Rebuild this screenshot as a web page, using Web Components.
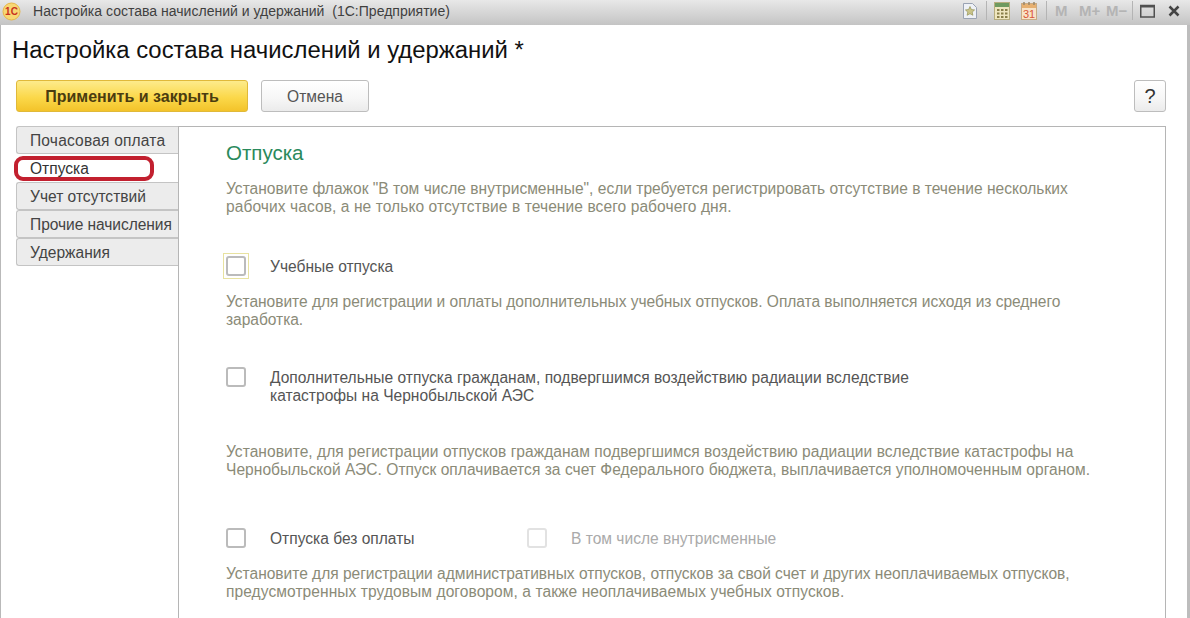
<!DOCTYPE html>
<html lang="ru">
<head>
<meta charset="utf-8">
<title>Настройка состава начислений и удержаний</title>
<style>
  html, body { margin: 0; height: 100%; overflow: hidden; background: #fff; }
  body { font-family: "Liberation Sans", Arial, sans-serif; }
</style>
</head>
<body>
<app-window>
  <title-bar slot="bar">Настройка состава начислений и удержаний&nbsp; (1С:Предприятие)</title-bar>
  <form-head>
    Настройка состава начислений и удержаний *
  </form-head>
  <tab-view>
    <side-tab style="letter-spacing:.18px">Почасовая оплата</side-tab>
    <side-tab active circled>Отпуска</side-tab>
    <side-tab>Учет отсутствий</side-tab>
    <side-tab style="letter-spacing:-.06px">Прочие начисления</side-tab>
    <side-tab>Удержания</side-tab>
    <h2 slot="page">Отпуска</h2>
    <hint-text slot="page" style="margin-top:16px">Установите флажок "В том числе внутрисменные", если требуется регистрировать отсутствие в течение нескольких<br><span style="letter-spacing:.07px">рабочих часов, а не только отсутствие в течение всего рабочего дня.</span></hint-text>
    <check-row slot="page" focused style="margin-top:37px">Учебные отпуска</check-row>
    <hint-text slot="page" style="margin-top:14px;letter-spacing:-.045px">Установите для регистрации и оплаты дополнительных учебных отпусков. Оплата выполняется исходя из среднего<br>заработка.</hint-text>
    <check-row slot="page" style="margin-top:35px">Дополнительные отпуска гражданам, подвергшимся воздействию радиации вследствие<br>катастрофы на Чернобыльской АЭС</check-row>
    <hint-text slot="page" style="margin-top:38px;letter-spacing:.028px">Установите, для регистрации отпусков гражданам подвергшимся воздействию радиации вследствие катастрофы на<br>Чернобыльской АЭС. Отпуск оплачивается за счет Федерального бюджета, выплачивается уполномоченным органом.</hint-text>
    <div slot="page" style="display:flex;margin-top:46px">
      <check-row style="width:301px">Отпуска без оплаты</check-row>
      <check-row disabled>В том числе внутрисменные</check-row>
    </div>
    <hint-text slot="page" style="margin-top:14px"><span style="letter-spacing:-.027px">Установите для регистрации административных отпусков, отпусков за свой счет и других неоплачиваемых отпусков,</span><br><span style="letter-spacing:.065px">предусмотренных трудовым договором, а также неоплачиваемых учебных отпусков.</span></hint-text>
  </tab-view>
</app-window>

<script>
class AppWindow extends HTMLElement {
  connectedCallback() {
    this.attachShadow({ mode: 'open' }).innerHTML = `
      <style>
        :host { display: flex; flex-direction: column; height: 618px; overflow: hidden; }
        main {
          flex: 1;
          display: flex;
          flex-direction: column;
          min-height: 0;
          border-left: 1px solid #b9b9b9;
          border-right: 3px solid #bdbdbd;
        }
      </style>
      <slot name="bar"></slot>
      <main><slot></slot></main>
    `;
  }
}

class TitleBar extends HTMLElement {
  connectedCallback() {
    this.attachShadow({ mode: 'open' }).innerHTML = `
      <style>
        :host {
          display: flex;
          align-items: center;
          height: 25px;
          flex: none;
          background: linear-gradient(#e8e8e8, #c4c4c4);
          color: #3f3f3f;
          font-size: 14.040px;
        }
        .logo {
          width: 19px; height: 19px; margin-left: 2px; flex: none;
          display: block;
          margin-top: -3px;
        }
        .caption { margin-left: 12px; white-space: nowrap; flex: 1; margin-top: -4px; }
        .tools { display: flex; align-items: center; height: 100%; margin-top: -4px; }
        .tools svg { display: block; flex: none; }
        .sep { width: 1px; height: 19px; background: #b4b4b4; }
        .m { color: #b4b4b4; font-weight: bold; font-size: 15px; white-space: nowrap; }
      </style>
      <svg class="logo" viewBox="0 0 19 19">
        <circle cx="9.500" cy="9.500" r="8.500" fill="#f7d774" stroke="#e8b64a"/>
        <text x="9.500" y="13" text-anchor="middle" font-size="10" font-weight="bold" fill="#c8321e" font-family="Liberation Sans">1С</text>
      </svg>
      <span class="caption"><slot></slot></span>
      <div class="tools">
        <svg width="16" height="18" viewBox="0 0 16 18" style="margin-right:8px">
          <path d="M1.500 1.500h9l4 4v11h-13z" fill="#eef1f6" stroke="#9aa3b3"/>
          <path d="M8 4.500l1.400 3 3.200.4-2.400 2.200.7 3.200L8 11.700l-2.900 1.600.7-3.200-2.400-2.200 3.200-.4z" fill="#c9c48a" stroke="#8b8a48" stroke-width=".6"/>
        </svg>
        <div class="sep"></div>
        <svg width="16" height="18" viewBox="0 0 16 18" style="margin:0 11px 0 7px">
          <rect x=".5" y=".5" width="15" height="17" fill="#efe6bf" stroke="#b7ad7e"/>
          <rect x="1" y="1" width="14" height="4" fill="#6f9a5f"/>
          <path d="M3 7h2.500v2H3zM7 7h2.500v2H7zM11 7h2.500v2H11zM3 10.500h2.500v2H3zM7 10.500h2.500v2H7zM11 10.500h2.500v2H11zM3 14h2.500v2H3zM7 14h2.500v2H7zM11 14h2.500v2H11z" fill="#8a7f4a"/>
        </svg>
        <svg width="16" height="19" viewBox="0 0 16 19" style="margin-right:9px">
          <rect x=".5" y="2.500" width="15" height="16" fill="#f8e3c8" stroke="#c9ab85"/>
          <rect x="1" y="3" width="14" height="4" fill="#e7b070"/>
          <path d="M3 1v3M8 1v3M13 1v3" stroke="#9b8668" stroke-width="1.500"/>
          <text x="8" y="17" text-anchor="middle" font-size="11" fill="#d8553a" font-family="Liberation Sans">31</text>
        </svg>
        <div class="sep"></div>
        <span class="m" style="margin-left:8px;width:24px">M</span>
        <span class="m" style="width:27px">M+</span>
        <span class="m" style="width:26px">M−</span>
        <div class="sep"></div>
        <svg width="15" height="14" viewBox="0 0 15 14" style="margin:0 13px 0 7px">
          <rect x=".75" y="1.500" width="13.500" height="11.500" fill="none" stroke="#505050" stroke-width="1.500"/>
          <rect x="1" y="1" width="13" height="2.500" fill="#505050"/>
        </svg>
        <svg width="12" height="12" viewBox="0 0 12 12" style="margin-right:10px">
          <path d="M1.500 1.500l9 9M10.500 1.500l-9 9" stroke="#454545" stroke-width="2.500"/>
        </svg>
      </div>
    `;
  }
}

class FormHead extends HTMLElement {
  connectedCallback() {
    this.attachShadow({ mode: 'open' }).innerHTML = `
      <style>
        :host { display: block; flex: none; }
        h1 { margin: 12px 0 0 11px; font-size: 23.880px; line-height: 26px; font-weight: normal; color: #111; white-space: nowrap; }
        .row { display: flex; align-items: stretch; margin: 17px 21px 0 15px; height: 32px; }
        button {
          font: inherit; font-size: 15.570px; padding: 1px 0 0; box-sizing: border-box; height: 32px;
          border-radius: 3px; border: 1px solid #bdbdbd; color: #555;
          background: linear-gradient(#fff, #f6f6f6 60%, #ebebeb);
        }
        .main {
          width: 232px; font-size: 16px; font-weight: bold; color: #4a3c10; border-color: #e0b93a;
          background: linear-gradient(#fdeb8c, #fbd84a 55%, #f3c32a);
        }
        .cancel { width: 108px; margin-left: 13px; }
        .help { width: 32px; margin-left: auto; font-size: 20px; color: #333; }
      </style>
      <h1><slot></slot></h1>
      <div class="row">
        <button class="main">Применить и закрыть</button>
        <button class="cancel">Отмена</button>
        <button class="help">?</button>
      </div>
    `;
  }
}

class TabView extends HTMLElement {
  connectedCallback() {
    this.attachShadow({ mode: 'open' }).innerHTML = `
      <style>
        :host { display: flex; flex: 1; min-height: 0; margin: 14px 21px 0 15px; }
        .tabs { width: 162px; flex: none; }
        .page {
          flex: 1;
          border: 1px solid #b5b5b5;
          border-bottom: 0;
          padding: 15px 0 0 47px;
          min-height: 0;
        }
        ::slotted(h2) {
          margin: 0; font-size: 20.500px; line-height: 22px; font-weight: normal; color: #2a8a5c;
        }
      </style>
      <div class="tabs"><slot></slot></div>
      <div class="page"><slot name="page"></slot></div>
    `;
  }
}

class SideTab extends HTMLElement {
  connectedCallback() {
    this.attachShadow({ mode: 'open' }).innerHTML = `
      <style>
        :host {
          display: block; position: relative; box-sizing: border-box; height: 28px;
          padding-left: 13px; line-height: 28px; font-size: 15.570px; color: #444;
          white-space: nowrap;
          background: #ececec;
          border: 1px solid #c4c4c4; border-right: 0; border-radius: 3px 0 0 3px;
        }
        :host([active]) { background: #fff; border-color: transparent; color: #333; line-height: 28px; }
        .ring {
          position: absolute; left: -3px; top: 1px; width: 140px; height: 25px;
          box-sizing: border-box; border: 4px solid #c2202f; border-radius: 9px;
          pointer-events: none;
        }
      </style>
      <slot></slot>
      ${this.hasAttribute('circled') ? '<div class="ring"></div>' : ''}
    `;
  }
}

class HintText extends HTMLElement {
  connectedCallback() {
    this.attachShadow({ mode: 'open' }).innerHTML = `
      <style>
        :host { display: block; font-size: 15.570px; line-height: 18px; color: #8b8b78; white-space: nowrap; }
      </style>
      <slot></slot>
    `;
  }
}

class CheckRow extends HTMLElement {
  connectedCallback() {
    this.attachShadow({ mode: 'open' }).innerHTML = `
      <style>
        :host { display: flex; align-items: flex-start; font-size: 15.570px; line-height: 18px; color: #555; white-space: nowrap; }
        :host([disabled]) { color: #aaa; }
        .wrap { width: 26px; height: 26px; margin-left: -3px; flex: none; display: flex; align-items: center; justify-content: center; box-sizing: border-box; border: 1px solid transparent; }
        :host([focused]) .wrap { border-color: #e8e2a0; }
        .box { width: 20px; height: 20px; box-sizing: border-box; border: 2px solid #bbb; border-radius: 3px; background: #fff; }
        :host([disabled]) .box { border-color: #e2e2e2; }
        .label { margin-left: 21px; padding-top: 5px; }
      </style>
      <div class="wrap"><div class="box"></div></div>
      <div class="label"><slot></slot></div>
    `;
  }
}

customElements.define('app-window', AppWindow);
customElements.define('title-bar', TitleBar);
customElements.define('form-head', FormHead);
customElements.define('tab-view', TabView);
customElements.define('side-tab', SideTab);
customElements.define('hint-text', HintText);
customElements.define('check-row', CheckRow);
</script>
</body>
</html>
